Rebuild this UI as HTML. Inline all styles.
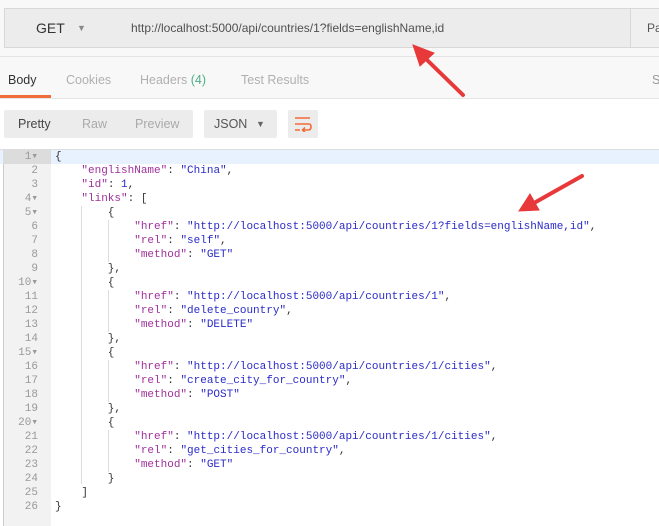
<!DOCTYPE html>
<html><head><style>
body{margin:0;width:659px;height:526px;background:#fff;position:relative;overflow:hidden;font-family:"Liberation Sans","DejaVu Sans",sans-serif;}
.abs{position:absolute}
.top{left:0;top:0;width:659px;height:56px;background:#f8f8f8;border-bottom:1px solid #e4e4e4}
.get{left:4px;top:8px;width:114px;height:38px;background:#ececec;border:1px solid #d8d8d8;font-size:14px;color:#333;line-height:38px}
.url{left:119px;top:8px;width:511px;height:38px;background:#ececec;border:1px solid #d8d8d8;border-left:none;font-size:12px;color:#505050;line-height:38px}
.pa{left:630px;top:8px;width:40px;height:38px;background:#f0f0f0;border:1px solid #d8d8d8;font-size:12px;color:#555;line-height:38px}
.tabs{left:0;top:57px;width:659px;height:41px;background:#f8f8f8;border-bottom:1px solid #e6e6e6;font-size:12.5px}
.tab{top:16px;color:#b0b0b0}
.seg{top:110px;height:28px;background:#ececec;border-radius:2px;font-size:12.5px;line-height:28px}
.mono{font-family:"Liberation Mono","DejaVu Sans Mono",monospace;font-size:11px;white-space:pre}
.gut{left:3px;top:150px;width:47px;height:376px;background:#f2f2f2;border-left:1px solid #ccc}
.ln{left:0;width:38px;text-align:right;color:#999;height:14px;line-height:14px}
.cl{left:55px;height:14px;line-height:14px;color:#333}
.k{color:#a0319b}.s{color:#2b2bc8}
</style></head><body>
<div class="abs top"></div>
<div class="abs get"><span style="position:absolute;left:31px">GET</span><span style="position:absolute;left:72px;font-size:9px;color:#888">▼</span></div>
<div class="abs url"><span style="padding-left:12px">http://localhost:5000/api/countries/1?fields=englishName,id</span></div>
<div class="abs pa"><span style="padding-left:16px">Pa</span></div>
<div class="abs tabs">
<span class="abs tab" style="left:8px;color:#333">Body</span>
<span class="abs tab" style="left:66px">Cookies</span>
<span class="abs tab" style="left:140px">Headers <span style="color:#4fb08a">(4)</span></span>
<span class="abs tab" style="left:241px">Test Results</span>
<span class="abs tab" style="left:652px;color:#999">S</span>
<div class="abs" style="left:0;top:38px;width:51px;height:3px;background:#f26b3a"></div>
</div>
<div class="abs seg" style="left:4px;width:189px"><span class="abs" style="left:14px;color:#444">Pretty</span><span class="abs" style="left:78px;color:#aaa">Raw</span><span class="abs" style="left:131px;color:#aaa">Preview</span></div>
<div class="abs seg" style="left:204px;width:73px"><span class="abs" style="left:10px;color:#555">JSON</span><span class="abs" style="left:52px;font-size:9px;color:#666">▼</span></div>
<div class="abs seg" style="left:288px;width:30px">
<svg class="abs" style="left:6px;top:6px" width="18" height="16"><path d="M1 2H16M1 8H15Q17 8 17 11 17 14 14 14H9M11 11.5L8.5 14 11 16.5M1 14H6" fill="none" stroke="#f26b3a" stroke-width="1.6"/></svg></div>
<div class="abs" style="left:0;top:149px;width:659px;height:1px;background:#ddd"></div>
<div class="abs gut"></div>
<div class="abs" style="left:0;top:150px;width:659px;height:14px;background:#e8f2fe"></div>
<div class="abs" style="left:3px;top:150px;width:48px;height:14px;background:#dcdcdc"></div>
<svg class="abs" style="left:0;top:0" width="659" height="526">
<g stroke="#ddd" stroke-width="1"><line x1="81.5" y1="206" x2="81.5" y2="484"/><line x1="108.5" y1="220" x2="108.5" y2="262"/><line x1="108.5" y1="290" x2="108.5" y2="332"/><line x1="108.5" y1="360" x2="108.5" y2="402"/><line x1="108.5" y1="430" x2="108.5" y2="472"/></g>
</svg>
<div id="code" class="abs mono" style="left:0;top:150px;width:659px">
<div class="abs ln" style="top:0">1▾</div><div class="abs cl" style="top:0">{</div>
<div class="abs ln" style="top:14px">2</div><div class="abs cl" style="top:14px">    <span class="k">"englishName"</span>: <span class="s">"China"</span>,</div>
<div class="abs ln" style="top:28px">3</div><div class="abs cl" style="top:28px">    <span class="k">"id"</span>: <span class="s">1</span>,</div>
<div class="abs ln" style="top:42px">4▾</div><div class="abs cl" style="top:42px">    <span class="k">"links"</span>: [</div>
<div class="abs ln" style="top:56px">5▾</div><div class="abs cl" style="top:56px">        {</div>
<div class="abs ln" style="top:70px">6</div><div class="abs cl" style="top:70px">            <span class="k">"href"</span>: <span class="s">"http://localhost:5000/api/countries/1?fields=englishName,id"</span>,</div>
<div class="abs ln" style="top:84px">7</div><div class="abs cl" style="top:84px">            <span class="k">"rel"</span>: <span class="s">"self"</span>,</div>
<div class="abs ln" style="top:98px">8</div><div class="abs cl" style="top:98px">            <span class="k">"method"</span>: <span class="s">"GET"</span></div>
<div class="abs ln" style="top:112px">9</div><div class="abs cl" style="top:112px">        },</div>
<div class="abs ln" style="top:126px">10▾</div><div class="abs cl" style="top:126px">        {</div>
<div class="abs ln" style="top:140px">11</div><div class="abs cl" style="top:140px">            <span class="k">"href"</span>: <span class="s">"http://localhost:5000/api/countries/1"</span>,</div>
<div class="abs ln" style="top:154px">12</div><div class="abs cl" style="top:154px">            <span class="k">"rel"</span>: <span class="s">"delete_country"</span>,</div>
<div class="abs ln" style="top:168px">13</div><div class="abs cl" style="top:168px">            <span class="k">"method"</span>: <span class="s">"DELETE"</span></div>
<div class="abs ln" style="top:182px">14</div><div class="abs cl" style="top:182px">        },</div>
<div class="abs ln" style="top:196px">15▾</div><div class="abs cl" style="top:196px">        {</div>
<div class="abs ln" style="top:210px">16</div><div class="abs cl" style="top:210px">            <span class="k">"href"</span>: <span class="s">"http://localhost:5000/api/countries/1/cities"</span>,</div>
<div class="abs ln" style="top:224px">17</div><div class="abs cl" style="top:224px">            <span class="k">"rel"</span>: <span class="s">"create_city_for_country"</span>,</div>
<div class="abs ln" style="top:238px">18</div><div class="abs cl" style="top:238px">            <span class="k">"method"</span>: <span class="s">"POST"</span></div>
<div class="abs ln" style="top:252px">19</div><div class="abs cl" style="top:252px">        },</div>
<div class="abs ln" style="top:266px">20▾</div><div class="abs cl" style="top:266px">        {</div>
<div class="abs ln" style="top:280px">21</div><div class="abs cl" style="top:280px">            <span class="k">"href"</span>: <span class="s">"http://localhost:5000/api/countries/1/cities"</span>,</div>
<div class="abs ln" style="top:294px">22</div><div class="abs cl" style="top:294px">            <span class="k">"rel"</span>: <span class="s">"get_cities_for_country"</span>,</div>
<div class="abs ln" style="top:308px">23</div><div class="abs cl" style="top:308px">            <span class="k">"method"</span>: <span class="s">"GET"</span></div>
<div class="abs ln" style="top:322px">24</div><div class="abs cl" style="top:322px">        }</div>
<div class="abs ln" style="top:336px">25</div><div class="abs cl" style="top:336px">    ]</div>
<div class="abs ln" style="top:350px">26</div><div class="abs cl" style="top:350px">}</div>
</div>
<svg class="abs" style="left:0;top:0" width="659" height="526">
<g fill="#e8393a" stroke="#e8393a">
<line x1="463" y1="95" x2="425" y2="58" stroke-width="4" stroke-linecap="round"/>
<polygon points="413,45 434,53 420,66" stroke-width="1"/>
<line x1="582" y1="176" x2="534" y2="203" stroke-width="4" stroke-linecap="round"/>
<polygon points="519,211 530,194 539,210" stroke-width="1"/>
</g>
</svg>
</body></html>
